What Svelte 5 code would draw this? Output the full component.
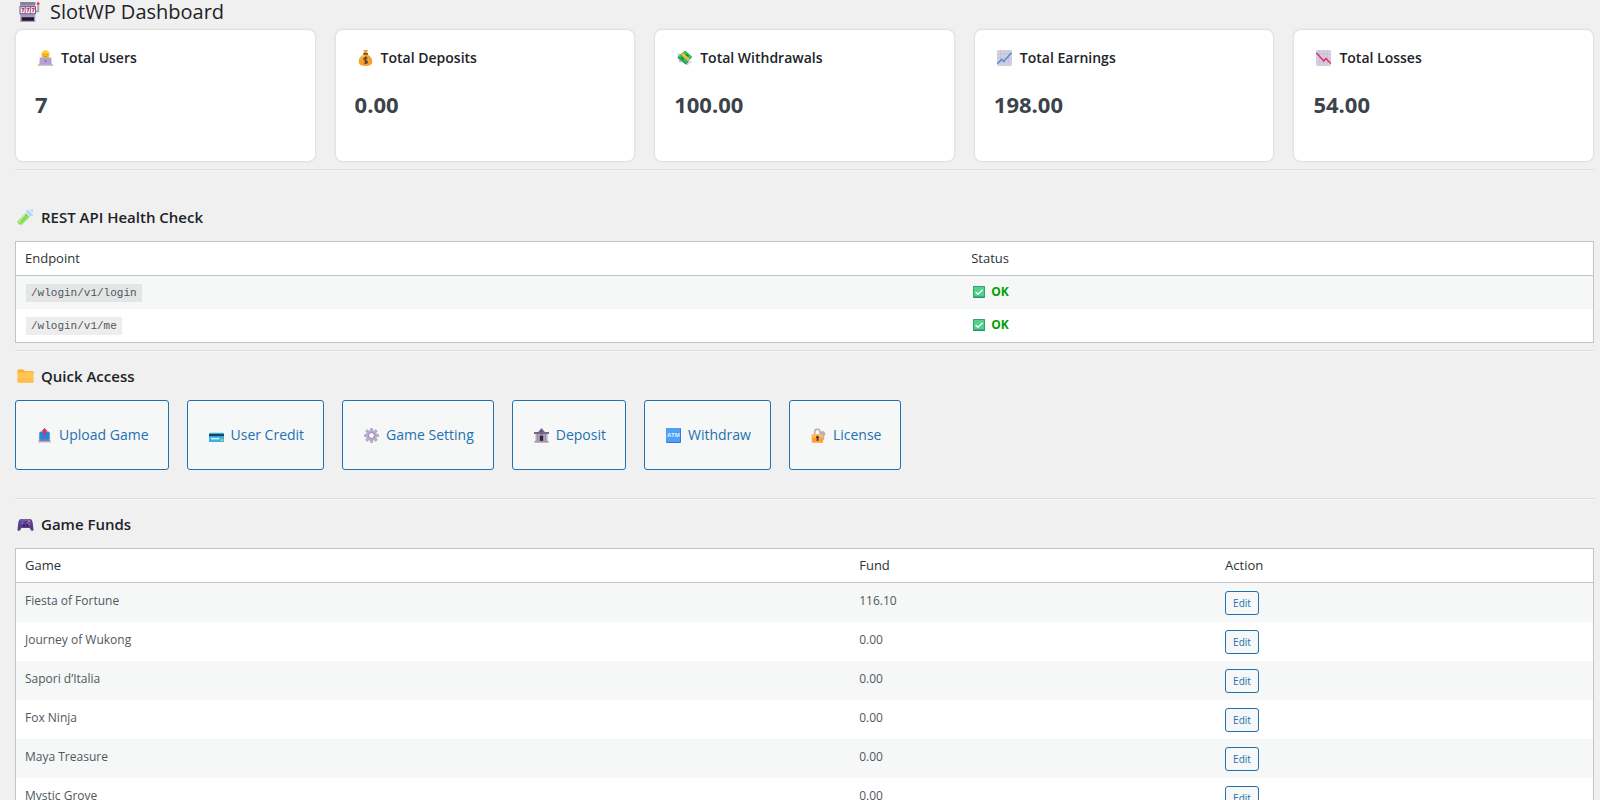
<script>
  const stats = [
    { icon: 'user', label: 'Total Users', value: '7' },
    { icon: 'bag', label: 'Total Deposits', value: '0.00' },
    { icon: 'money', label: 'Total Withdrawals', value: '100.00' },
    { icon: 'up', label: 'Total Earnings', value: '198.00' },
    { icon: 'down', label: 'Total Losses', value: '54.00' }
  ];

  const endpoints = ['/wlogin/v1/login', '/wlogin/v1/me'];

  const links = [
    { icon: 'upload', label: 'Upload Game' },
    { icon: 'card', label: 'User Credit' },
    { icon: 'gear', label: 'Game Setting' },
    { icon: 'bank', label: 'Deposit' },
    { icon: 'atm', label: 'Withdraw' },
    { icon: 'lock', label: 'License' }
  ];

  const games = [
    { name: 'Fiesta of Fortune', fund: '116.10' },
    { name: 'Journey of Wukong', fund: '0.00' },
    { name: 'Sapori d’Italia', fund: '0.00' },
    { name: 'Fox Ninja', fund: '0.00' },
    { name: 'Maya Treasure', fund: '0.00' },
    { name: 'Mystic Grove', fund: '0.00' }
  ];

  const teeth = [0, 45, 90, 135, 180, 225, 270, 315];
</script>

{#snippet icon(name)}
  <svg class="icon" viewBox="0 0 16 16" aria-hidden="true">
    {#if name === 'slot'}
      <path d="M.6 0h12v16H.6z" fill="#a79bb5" />
      <path d="M.6 0h12v2.4H.6z" fill="#8c8199" />
      <path d="M0 3.4h13.2v6.4H0z" fill="#6b5a80" />
      <path d="M.8 4.2h3.4V9H.8zM4.9 4.2h3.4V9H4.9zM9 4.2h3.4V9H9z" fill="#f7eef8" />
      <path d="M1.6 5.3h1.8L2.3 8.2M5.7 5.3h1.8L6.4 8.2M9.8 5.3h1.8l-1.1 2.9" stroke="#e0356e" stroke-width=".9" fill="none" />
      <path d="M1.8 12.2h9.8V15H1.8z" fill="#241433" />
      <path d="M13 7.5h2v-5" stroke="#a79bb5" stroke-width="1.4" fill="none" />
      <circle cx="14.9" cy="1.3" r="1.1" fill="#e8274b" />
    {:else if name === 'user'}
      <path d="M2.5 15v-2.3q.3-3.2 5.5-3.2t5.5 3.2V15z" fill="#f5a623" />
      <circle cx="8" cy="4.6" r="4" fill="#fbb91f" />
      <path d="M4.3 3.7Q5 .4 8 .4t3.7 3.3Q9 3.9 8.2 2.4 7 3.8 4.3 3.7z" fill="#ffcf3d" />
      <path d="M6.5 4.4v.9M9.5 4.4v.9M6.8 6.7h2.4" stroke="#ba6714" stroke-width=".7" />
      <path d="M2.3 7.6h11.4l.5 7.4H1.8z" fill="#b5a0d2" />
      <circle cx="8" cy="11" r=".9" fill="#7d5fa7" />
      <path d="M.6 14.6h14.8v1.2H.6z" fill="#c9b6dd" />
      <path d="M.4 14.6h1.7v1H.4zM13.9 14.6h1.7v1h-1.7z" fill="#f5a623" />
    {:else if name === 'bag'}
      <path d="M6 0h4.4L9.7 2.5 10 4.4Q14.8 7 14.8 11.5 14.8 16 8 16T1.2 11.5Q1.2 7 6 4.4l.5-2z" fill="#f2a02e" />
      <path d="M6.3 5Q3 7 2.6 11q2-4 5.8-6z" fill="#ffc857" />
      <path d="M5.8 3.2h4.6v1.4H5.8z" fill="#54382a" />
      <path d="M9.8 8.3Q8.6 7.2 7 8t.3 2.3q3.4.8 2.4 2.3-1.2 1.3-3.2 0M8.2 6.6v7.4" stroke="#54382a" stroke-width="1.1" fill="none" />
    {:else if name === 'money'}
      <path d="m2.4 8.4-2 .2 2.6 2-.8 1.5 4 .1M9 12l.4 3.2 1.4-1 .8 1.4.8-4" fill="#bfb3cb" />
      <path d="m8.8.8 6.8 6.3-6.5 7.4L1 7.6z" fill="#0f994f" />
      <path d="m8.8.8 6.8 6.3-6.4 5.6L1 6z" fill="#2cc46b" />
      <path d="m4.2 4.2 2.2-1.7 7.3 6.4-2.3 2.2z" fill="#ffb62e" />
      <path d="m4.6 7.2 2.3 2.1M9.4 4.2l2.7 2.3" stroke="#0c8c44" stroke-width="1.6" />
      <path d="m.5 4 3-.8-1.4 3zM13 11l2.7 1-3.3 1.7z" fill="#d2c8dc" />
    {:else if name === 'up' || name === 'down'}
      <rect x=".5" width="15" height="16" rx="1" fill="#d8cfe3" />
      <path d="M4.2 0v16M8 0v16M11.8 0v16M.5 4h15M.5 8h15M.5 12h15" stroke="#bdb1cd" stroke-width=".5" />
      {#if name === 'up'}
        <path d="m.8 13.8 4.4-4.6 2 2.3L15 2.7" stroke="#3c91d5" stroke-width="1.4" fill="none" />
      {:else}
        <path d="m.8 2.7 7.4 8.2 2.3-2.3 4.7 5" stroke="#e02f62" stroke-width="1.5" fill="none" />
      {/if}
    {:else if name === 'tube'}
      <path d="M9.8 2.2 13.8 6.2 5 15Q2.8 16.4 1 14.8T1 11z" fill="#bfe3f3" />
      <path d="M7.8 4.4 12 8 5 15Q2.8 16.4 1 14.8T1 11z" fill="#8fe35c" />
      <path d="M7.3 6 2.6 10.7Q1.6 12 2 13" stroke="#c9f59f" stroke-width="1.2" fill="none" />
      <path d="m8.5 6.2 1 1M6.3 8.4l1 1M4 10.7l1 1" stroke="#2f9142" stroke-width=".8" />
      <path d="m9.6.5 5.9 5.8-1 1L8.6 1.5z" fill="#a5cdea" />
      <path d="m11.5 1 3.8-.7.4 4.3z" fill="#b8dff5" />
    {:else if name === 'folder'}
      <path d="M0 2.4q0-1 1-1h4.6L7.5 3H15q1 0 1 1v2H0z" fill="#f5ae36" />
      <path d="M0 4.2h5.6L7 3.4h9v10.4q0 1-1 1H1q-1 0-1-1z" fill="#ffc64e" />
      <path d="M0 10h16v3.8q0 1-1 1H1q-1 0-1-1z" fill="#ffbd58" />
    {:else if name === 'check'}
      <rect width="16" height="16" rx="1" fill="#2e8f66" />
      <path d="M1 1h14v13H1z" fill="#50d28d" />
      <path d="m3.5 8.1 3 3L12.8 5" fill="none" stroke="#fff" stroke-width="1.7" />
    {:else if name === 'upload'}
      <path d="m2.5 10 1-.5h9l1 .5 1.5 5.5H1z" fill="#c5b8d3" />
      <path d="M2.4 5.2Q2.4 3.6 4 3.6h8q1.6 0 1.6 1.6V12l-2 .9H4.2l-1.8-.9z" fill="#2887d6" />
      <path d="M3.2 12.2h9.6L14 14H2z" fill="#8a76a3" />
      <path d="m8 0 3.4 3.8H9.3v4H6.7v-4H4.6z" fill="#e52c52" />
    {:else if name === 'card'}
      <rect y="5" width="16" height="10" rx="1" fill="#31b4e6" />
      <path d="M0 6.4h16v2.3H0z" fill="#27405a" />
      <path d="M2 10.5h9v1.7H2z" fill="#d8edf4" />
      <path d="M12.4 12h2.5v1.8h-2.5z" fill="#ffc928" />
    {:else if name === 'gear'}
      {#each teeth as angle}
        <rect x="6.4" y="0" width="3.2" height="4" rx=".7" fill="#b8accb" transform="rotate({angle} 8 8)" />
      {/each}
      <circle cx="8" cy="8" r="4.4" fill="none" stroke="#b8accb" stroke-width="2.8" />
      <circle cx="8" cy="8" r="3.2" fill="none" stroke="#917fab" stroke-width=".9" />
    {:else if name === 'bank'}
      <path d="M1.8 5h12.4v10H1.8z" fill="#8f849c" />
      <path d="M0 4.2h4.4L8 0l3.6 4.2H16v2.2H0z" fill="#766981" />
      <path d="M2.9 6.4V14M5.2 6.4V14M10.8 6.4V14M13.1 6.4V14" stroke="#c0b5cb" stroke-width="1.1" />
      <path d="M6.3 8.4h3.4V14H6.3z" fill="#342140" />
      <circle cx="8" cy="3.6" r="1.3" fill="#6b4a9b" />
      <path d="M.5 13.7h15v2H.5z" fill="#a79cb2" />
    {:else if name === 'atm'}
      <rect width="16" height="16" rx="1" fill="#3975d4" />
      <path d="M0 1q0-1 1-1h14v15H1.2Q0 15 0 14z" fill="#4ba2f8" />
      <text x="8" y="10" text-anchor="middle" font-size="6" font-weight="700" fill="#e4f2ff">ATM</text>
    {:else if name === 'lock'}
      <path d="M9.8 5.5Q10 3.2 12.5 3.2T15.4 6q0 1.9-1.6 2.4l.8 1.2-1 1 .7 1-2 2z" fill="#bbaacd" />
      <path d="M4 7.5V4Q4 1.2 6.8 1.2T9.6 4v3.5" fill="none" stroke="#b5a8c2" stroke-width="1.6" />
      <rect x=".8" y="6.4" width="12" height="9.4" rx="1" fill="#ff9e3b" />
      <path d="M1.8 6.4h10q1 0 1 1V10H.8V7.4q0-1 1-1z" fill="#ffc04a" />
      <circle cx="7" cy="9.8" r="1.5" fill="#49345a" />
      <path d="M6.3 10h1.4l.4 3.7H5.9z" fill="#49345a" />
    {:else if name === 'pad'}
      <path d="M3 3h10q1.6.4 2.1 3l.9 7.2q-.1 2-1.5 1.7-1 0-2.4-3H3.9q-1.4 3-2.4 3Q.1 15.2 0 13.2L.9 6Q1.4 3.4 3 3z" fill="#5e3d91" />
      <path d="M3 3h10l1 2H2z" fill="#7a58ac" />
      <path d="M3 6.8h3.4M4.7 5.1v3.4" stroke="#3d78bd" stroke-width="1.2" />
      <circle cx="6.4" cy="9.5" r="1.2" fill="#392052" />
      <circle cx="9.7" cy="9.5" r="1.2" fill="#392052" />
      <circle cx="11.5" cy="5.2" r=".8" fill="#f9c23c" />
      <circle cx="13" cy="6.7" r=".8" fill="#f8312f" />
      <circle cx="10" cy="6.7" r=".8" fill="#3f9be8" />
      <circle cx="11.5" cy="8.2" r=".8" fill="#44c767" />
    {/if}
  </svg>
{/snippet}

<main class="wrap">
  <h1>{@render icon('slot')}SlotWP Dashboard</h1>

  <div class="stats">
    {#each stats as stat}
      <div class="stat">
        <h3>{@render icon(stat.icon)}{stat.label}</h3>
        <p>{stat.value}</p>
      </div>
    {/each}
  </div>

  <hr />

  <section class="health">
    <h2>{@render icon('tube')}REST API Health Check</h2>
    <table>
      <colgroup>
        <col class="col-endpoint" />
        <col />
      </colgroup>
      <thead>
        <tr><th>Endpoint</th><th>Status</th></tr>
      </thead>
      <tbody>
        {#each endpoints as endpoint}
          <tr>
            <td><code>{endpoint}</code></td>
            <td><strong class="ok">{@render icon('check')}OK</strong></td>
          </tr>
        {/each}
      </tbody>
    </table>
  </section>

  <hr />

  <section>
    <h2>{@render icon('folder')}Quick Access</h2>
    <nav class="quick">
      {#each links as link}
        <a href="#{link.icon}">{@render icon(link.icon)}{link.label}</a>
      {/each}
    </nav>
  </section>

  <hr />

  <section class="funds">
    <h2>{@render icon('pad')}Game Funds</h2>
    <table>
      <colgroup>
        <col class="col-game" />
        <col class="col-fund" />
        <col />
      </colgroup>
      <thead>
        <tr><th>Game</th><th>Fund</th><th>Action</th></tr>
      </thead>
      <tbody>
        {#each games as game}
          <tr>
            <td>{game.name}</td>
            <td>{game.fund}</td>
            <td class="action"><button type="button">Edit</button></td>
          </tr>
        {/each}
      </tbody>
    </table>
  </section>
</main>

<style>
  :global(html) {
    scrollbar-width: none;
  }

  :global(body) {
    margin: 0;
    background: #f0f0f1;
  }

  .wrap {
    padding: 0 6px 0 15px;
    color: #3c434a;
    font: 13px/18px "Open Sans", "Noto Sans", sans-serif;
  }

  .icon {
    flex: none;
    width: 17px;
    height: 16px;
    margin: 0 7px 0 2px;
  }

  h1,
  h2,
  h3 {
    display: flex;
    align-items: center;
    margin: 0;
    color: #1d2327;
  }

  h1 {
    font-size: 20px;
    font-weight: 400;
    line-height: 24px;
    margin-bottom: 5px;
  }

  h1 .icon {
    width: 21px;
    height: 20px;
    margin: 0 10px 0 4px;
  }

  h2 {
    font-size: 15px;
    font-weight: 600;
    line-height: 24px;
    margin: 12px 0;
  }

  h3 {
    font-size: 14px;
    font-weight: 600;
    line-height: 20px;
  }

  .stats {
    display: grid;
    grid-template-columns: repeat(5, 1fr);
    gap: 19px;
  }

  .stat {
    padding: 18px 19px 41px;
    background: #fff;
    border: 1px solid #e2e2e3;
    border-radius: 8px;
    box-shadow: 0 0 2px rgba(0, 0, 0, 0.08);
  }

  .stat p {
    margin: 20px 0 0;
    font-size: 22px;
    font-weight: 700;
    line-height: 32px;
  }

  hr {
    height: 0;
    margin: 7px 0 0;
    border: 0;
    border-top: 1px solid #dcdcde;
    border-bottom: 1px solid #f6f7f7;
  }

  .health {
    padding-top: 22px;
  }

  table {
    width: 100%;
    table-layout: fixed;
    border: 1px solid #c3c4c7;
    border-spacing: 0;
    background: #fff;
  }

  .col-endpoint {
    width: 60%;
  }

  .col-game {
    width: 52.9%;
  }

  .col-fund {
    width: 23.2%;
  }

  th {
    padding: 7px 9px 8px;
    border-bottom: 1px solid #c3c4c7;
    color: #2c3338;
    font-size: 13px;
    font-weight: 400;
    text-align: left;
  }

  td {
    padding: 7px 9px 8px;
    color: #50575e;
    font-size: 12px;
    vertical-align: top;
  }

  .funds td {
    padding-top: 9px;
  }

  .funds .action {
    padding: 8px 9px 7px;
  }

  tbody tr:nth-child(odd) {
    background: #f6f7f7;
  }

  code {
    margin: 0 1px;
    padding: 3px 5px;
    background: rgba(0, 0, 0, 0.07);
    font: 11px/12px "Liberation Mono", monospace;
  }

  .ok {
    display: flex;
    align-items: center;
    color: #00a000;
    font-weight: 700;
  }

  .ok .icon {
    width: 12px;
    height: 12px;
    margin: 0 6px 0 2px;
  }

  .quick {
    display: flex;
    flex-wrap: wrap;
    gap: 18px;
    margin-bottom: 28px;
  }

  .quick a {
    display: flex;
    align-items: center;
    padding: 0 19px;
    border: 1px solid #2271b1;
    border-radius: 3px;
    background: #f6f7f7;
    color: #2271b1;
    font-size: 14px;
    line-height: 68px;
    text-decoration: none;
  }

  .quick .icon {
    width: 15px;
    height: 15px;
  }

  button {
    display: block;
    height: 24px;
    padding: 0 7px;
    border: 1px solid #2271b1;
    border-radius: 3px;
    background: #f6f7f7;
    color: #2271b1;
    font: 10px/22px "Open Sans", "Noto Sans", sans-serif;
    cursor: pointer;
  }
</style>
